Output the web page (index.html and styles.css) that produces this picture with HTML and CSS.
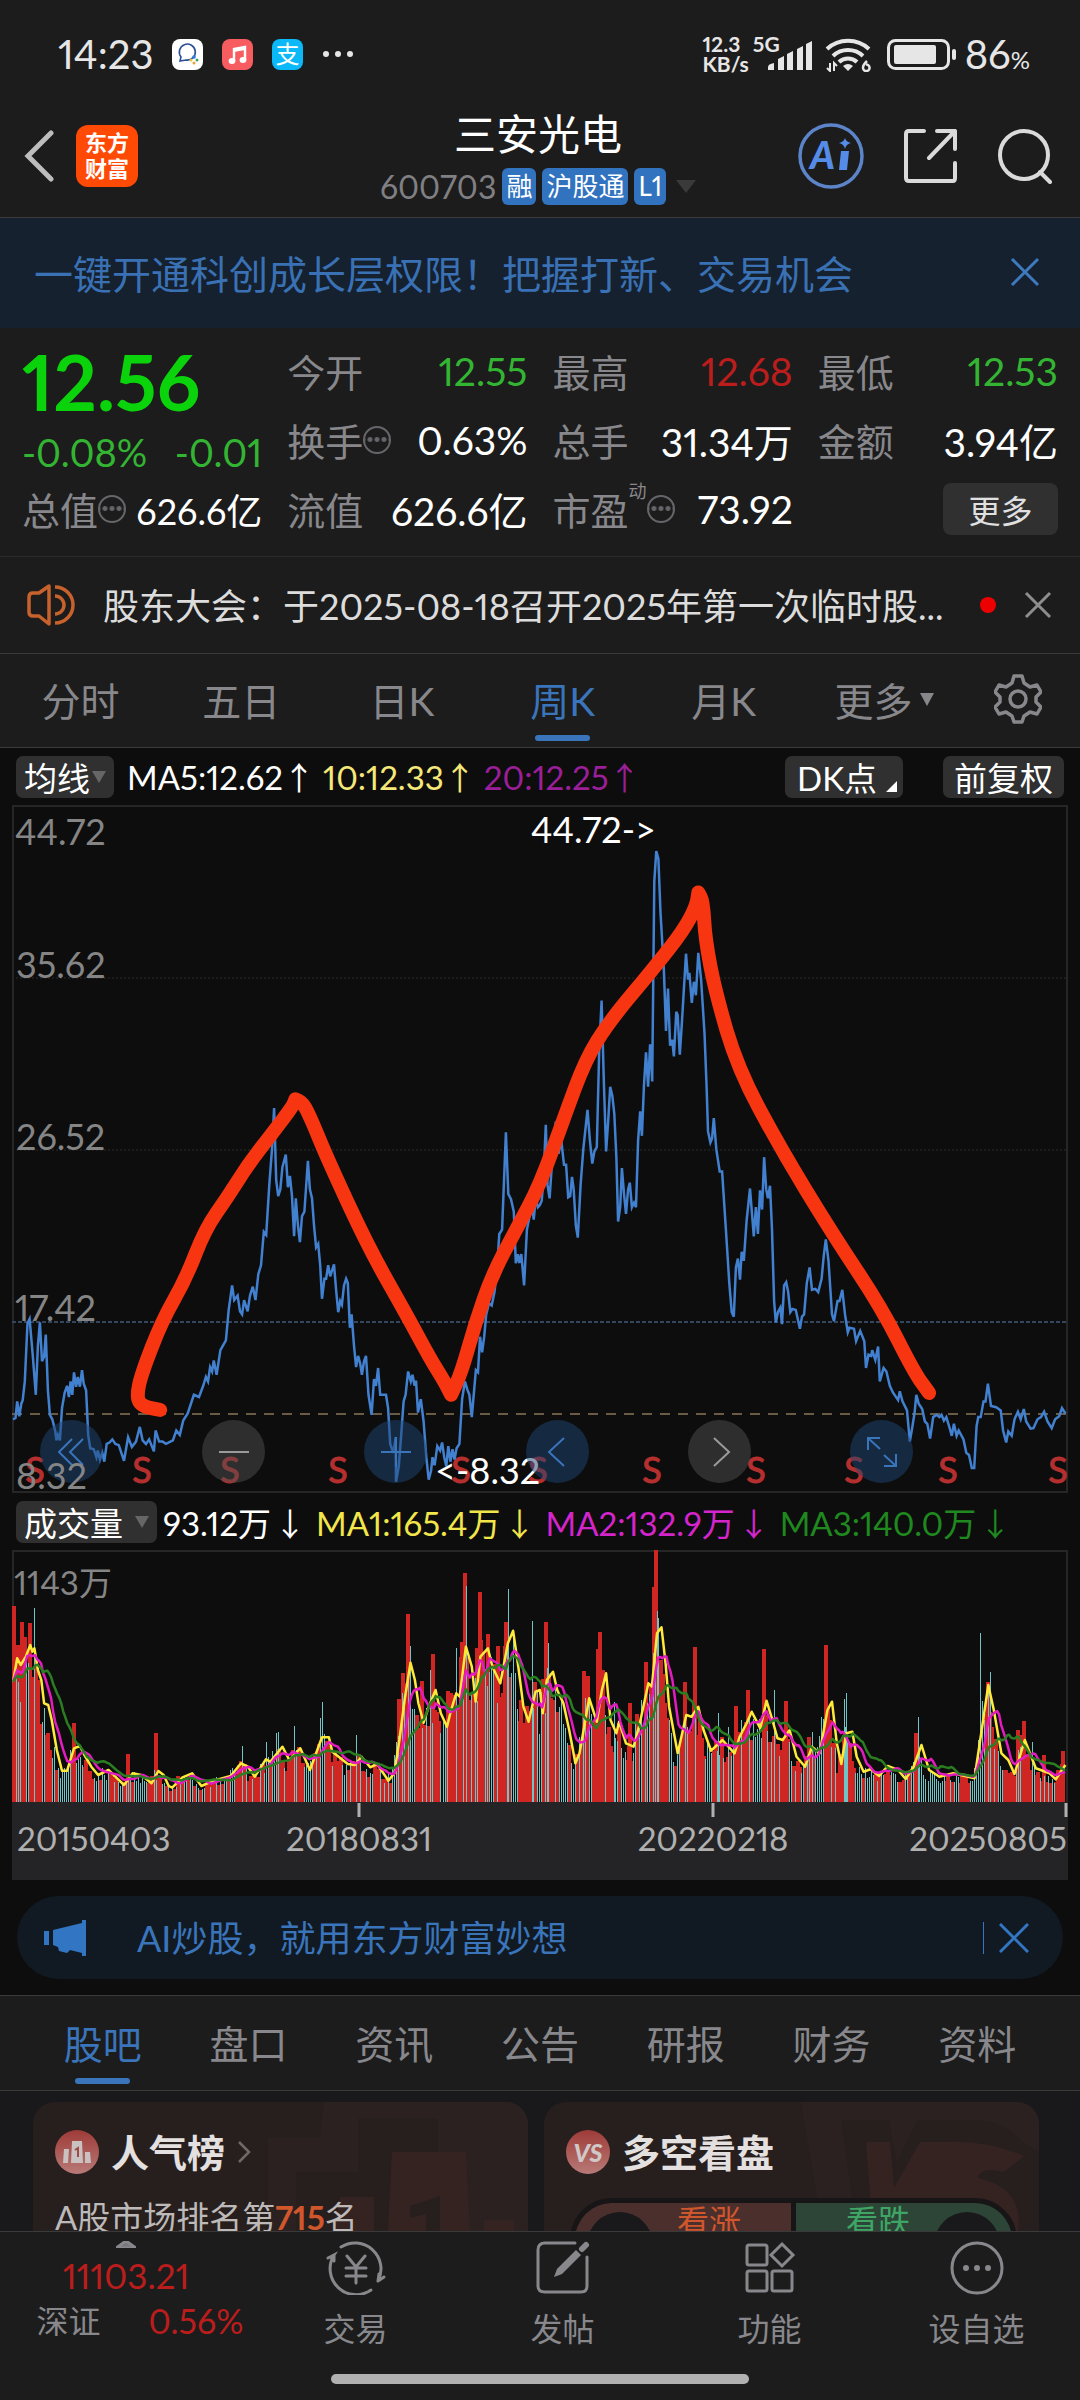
FILE: index.html
```html
<!DOCTYPE html>
<html lang="zh-CN">
<head>
  <meta charset="UTF-8" />
  <meta name="viewport" content="width=device-width, initial-scale=1.0"/>
  <title>三安光电 600703</title>
  <link rel="stylesheet" href="styles.css">
</head>
<body>
  <div class="statusbar">
    <span class="clock">14:23</span>
    <svg class="app-icon" viewBox="0 0 31 31">
      <rect width="31" height="31" rx="8" fill="#fff"/>
      <path d="M8 22l1-4a8 8 0 1 1 5 3z" fill="none" stroke="#2b4f96" stroke-width="1.6"/>
      <circle cx="22" cy="18" r="1.8" fill="#2f7be0"/><circle cx="25" cy="21" r="1.5" fill="#3aa655"/><circle cx="19" cy="21" r="1.5" fill="#e8c43a"/><circle cx="22" cy="24" r="1.5" fill="#e8a03a"/>
    </svg>
    <svg class="app-icon" viewBox="0 0 31 31">
      <rect width="31" height="31" rx="8" fill="#f75d60"/>
      <path d="M12 22V10l11-2v13" fill="none" stroke="#fff" stroke-width="2.4"/><path d="M12 10l11-2v3l-11 2z" fill="#fff"/>
      <ellipse cx="10" cy="22" rx="3.4" ry="3" fill="#fff"/><ellipse cx="21" cy="21" rx="3.4" ry="3" fill="#fff"/>
    </svg>
    <span class="app-icon pay">支</span>
    <svg class="more-dots" viewBox="0 0 32 8"><circle cx="4" cy="4" r="3" fill="#e6e6e6"/><circle cx="16" cy="4" r="3" fill="#e6e6e6"/><circle cx="28" cy="4" r="3" fill="#e6e6e6"/></svg>
    <span class="speed">12.3<br>KB/s</span>
    <span class="net">5G</span>
    <svg class="signal" viewBox="0 0 45 30" fill="#e6e6e6">
      <path d="M0 29v-3q0-3 6-4v7zM10 29V18l6-3v14zM19 29V13l6-3v19zM29 29V8l6-3v24zM38 29V3l6-3v29z"/>
    </svg>
    <svg class="wifi" viewBox="0 0 48 36" fill="none" stroke="#e6e6e6" stroke-width="4">
      <path d="M2 13a31 31 0 0 1 42 0M8 20a22 22 0 0 1 30 0M14 26a13 13 0 0 1 18 0"/>
      <path d="M23 35l-5-5q5-4 10 0z" fill="#e6e6e6" stroke="none"/>
      <path d="M5 27v8l-3-3M9 35v-8l3 3" stroke-width="2"/>
      <path d="M42 25q-4 4-4 6.500a3.300 3.300 0 1 0 3-3" stroke-width="2.500"/>
    </svg>
    <svg class="battery" viewBox="0 0 70 31">
      <rect x="1.500" y="1.500" width="60" height="28" rx="7" fill="none" stroke="#e6e6e6" stroke-width="3"/>
      <rect x="7" y="6" width="42" height="19" rx="2" fill="#e6e6e6"/>
      <rect x="65" y="10" width="4" height="11" rx="2" fill="#e6e6e6"/>
    </svg>
    <span class="percent">86<small>%</small></span>
  </div>

  <header class="header">
    <div class="header-side">
      <button class="icon-btn back" aria-label="返回">
        <svg width="30" height="52" viewBox="0 0 30 52"><path d="M27 3L4 26l23 23" fill="none" stroke="#bdbdbd" stroke-width="5" stroke-linecap="round"/></svg>
      </button>
      <a class="logo" href="#">东方<br>财富</a>
    </div>
    <div class="stock">
      <h1>三安光电</h1>
      <div class="stock-sub">
        <span class="code">600703</span>
        <span class="tag">融</span><span class="tag">沪股通</span><span class="tag">L1</span>
        <svg width="20" height="13" viewBox="0 0 20 13"><path d="M0 0h20L10 13z" fill="#3a3a3a"/></svg>
      </div>
    </div>
    <div class="header-side right">
      <button class="icon-btn" aria-label="AI">
        <svg width="66" height="68" viewBox="0 0 66 68">
          <circle cx="33" cy="34" r="31" fill="none" stroke="#5b84c9" stroke-width="3.500"/>
          <text x="12" y="47" class="ai-text">A</text>
          <path d="M43 29h8l-2 19h-8z" fill="#548ce8"/>
          <path d="M47 16q1 4 6 5q-5 1-6 6q-1-5-6-6q5-1 6-5z" fill="#548ce8"/>
        </svg>
      </button>
      <button class="icon-btn" aria-label="分享">
        <svg width="54" height="54" viewBox="0 0 54 54" fill="none" stroke="#dadada" stroke-width="4" stroke-linecap="round" stroke-linejoin="round"><path d="M20 2H5q-3 0-3 3v44q0 3 3 3h44q2 0 2-3V34M33 2h18v18M51 2L25 29"/></svg>
      </button>
      <button class="icon-btn" aria-label="搜索">
        <svg width="54" height="56" viewBox="0 0 54 56" fill="none" stroke="#dadada" stroke-width="4" stroke-linecap="round"><circle cx="26" cy="27" r="24"/><path d="M42 44l10 10"/></svg>
      </button>
    </div>
  </header>

  <div class="promo">
    <a href="#">一键开通科创成长层权限！把握打新、交易机会</a>
    <button class="icon-btn" aria-label="关闭">
      <svg width="30" height="30" viewBox="0 0 30 30"><path d="M2 2l26 26M28 2L2 28" stroke="#3f7ac0" stroke-width="3"/></svg>
    </button>
  </div>

  <section class="quote">
    <div class="price-box">
      <div class="price">12.56</div>
      <div class="change"><span>-0.08%</span><span>-0.01</span></div>
    </div>
    <div class="item"><span class="label">今开</span><span class="value green">12.55</span></div>
    <div class="item"><span class="label">最高</span><span class="value red">12.68</span></div>
    <div class="item"><span class="label">最低</span><span class="value green">12.53</span></div>
    <div class="item"><span class="label">换手<i class="tip"></i></span><span class="value">0.63%</span></div>
    <div class="item"><span class="label">总手</span><span class="value">31.34万</span></div>
    <div class="item"><span class="label">金额</span><span class="value">3.94亿</span></div>
    <div class="item"><span class="label">总值<i class="tip"></i></span><span class="value small">626.6亿</span></div>
    <div class="item"><span class="label">流值</span><span class="value">626.6亿</span></div>
    <div class="item"><span class="label">市盈<sup>动</sup><i class="tip"></i></span><span class="value">73.92</span></div>
    <div class="item end"><button class="more-btn">更多</button></div>
  </section>

  <div class="notice">
    <svg width="48" height="42" viewBox="0 0 48 42" fill="none" stroke="#c8622c" stroke-width="3.500" stroke-linejoin="round"><path d="M2 13q0-4 4-4h6L22 2v38l-10-8H6q-4 0-4-4z"/><path d="M28 3a18 18 0 0 1 0 36M28 12a9 9 0 0 1 0 18"/></svg>
    <a href="#">股东大会：于2025-08-18召开2025年第一次临时股...</a>
    <i class="dot"></i>
    <button class="icon-btn" aria-label="关闭">
      <svg width="28" height="28" viewBox="0 0 28 28"><path d="M2 2l24 24M26 2L2 26" stroke="#8e8e8e" stroke-width="3"/></svg>
    </button>
  </div>

  <nav class="tabs">
    <button>分时</button>
    <button>五日</button>
    <button>日K</button>
    <button class="active">周K</button>
    <button>月K</button>
    <button>更多<svg width="14" height="13" viewBox="0 0 14 13"><path d="M0 0h14L7 13z" fill="#88888c"/></svg></button>
    <button class="gear" aria-label="设置">
      <svg width="48" height="50" viewBox="0 0 48 50" fill="none" stroke="#88888c" stroke-width="3.500" stroke-linejoin="round"><path d="M20 2h8l2 7 6 4 7-2 4 7-5 5v5l5 5-4 7-7-2-6 4-2 6h-8l-2-6-6-4-7 2-4-7 5-5v-5l-5-5 4-7 7 2 6-4z"/><circle cx="24" cy="25" r="8"/></svg>
    </button>
  </nav>

  <main class="board">
    <div class="legend">
      <button class="chip">均线<svg width="14" height="12" viewBox="0 0 14 12"><path d="M0 0h14L7 12z" fill="#666"/></svg></button>
      <span class="ma5">MA5:12.62<b>↑</b></span>
      <span class="ma10">10:12.33<b>↑</b></span>
      <span class="ma20">20:12.25<b>↑</b></span>
      <button class="chip dk">DK点<svg width="11" height="11" viewBox="0 0 11 11"><path d="M11 0v11H0z" fill="#fff"/></svg></button>
      <button class="chip fq">前复权</button>
    </div>

    <div class="chart">
      <svg id="price" viewBox="0 0 1056 688">
        <path class="frame" d="M1 1h1054v686H1z"/>
        <path class="grid-line" d="M0 173h1056M0 345h1056"/>
        <path class="mid-line" d="M0 517h1056"/>
        <path class="cost-line" d="M0 609h1056"/>
        <g class="s-mark" id="marks"></g>
        <polyline id="priceLine" class="price-line"/>
        <g class="axis">
          <text x="3" y="40">44.72</text>
          <text x="4" y="173">35.62</text>
          <text x="4" y="345">26.52</text>
          <text x="3" y="516">17.42</text>
        </g>
        <path id="brush" class="brush"/>
        <text class="peak" x="519" y="38">44.72-&gt;</text>
        <text class="peak" x="423" y="679">&lt;-8.32</text>
      </svg>
      <div class="tools">
        <button aria-label="最左"><svg viewBox="0 0 30 30"><path d="M15 2L2 15l13 13M26 2L13 15l13 13"/></svg></button>
        <button class="off" aria-label="缩小"><svg viewBox="0 0 30 30"><path d="M0 15h30"/></svg></button>
        <button aria-label="放大"><svg viewBox="0 0 30 30"><path d="M0 15h30M15 0v30"/></svg></button>
        <button aria-label="左移"><svg viewBox="0 0 30 30"><path d="M21 1L6 15l15 14"/></svg></button>
        <button class="off" aria-label="右移"><svg viewBox="0 0 30 30"><path d="M9 1l15 14L9 29"/></svg></button>
        <button aria-label="全屏"><svg viewBox="0 0 30 30"><path d="M1 13V1h12M1 1l12 11M29 17v12H17M29 29L17 18"/></svg></button>
      </div>
      <span class="low">8.32</span>
    </div>

    <div class="legend vol">
      <button class="chip">成交量<svg width="14" height="12" viewBox="0 0 14 12"><path d="M0 0h14L7 12z" fill="#666"/></svg></button>
      <span class="v0">93.12万<b>↓</b></span>
      <span class="v1">MA1:165.4万<b>↓</b></span>
      <span class="v2">MA2:132.9万<b>↓</b></span>
      <span class="v3">MA3:140.0万<b>↓</b></span>
    </div>

    <div class="chart">
      <svg id="volume" viewBox="0 0 1056 330">
        <path class="frame" d="M1 1h1054v252H1z"/>
        <rect y="252" width="1056" height="78" fill="#242426"/>
        <path id="redBars" fill="#cf2624"/>
        <path id="cyanBars" fill="#70c4c6"/>
        <text class="vol-max" x="2" y="45">1143万</text>
        <polyline id="ma1" stroke="#ffe93b"/>
        <polyline id="ma2" stroke="#e41bc0"/>
        <polyline id="ma3" stroke="#2a7d20"/>
        <path d="M347 253v14M701 253v14M1054 253v14" stroke="#b0b0b0" stroke-width="3"/>
        <g class="date">
          <text x="5" y="301">20150403</text>
          <text x="347" y="301" text-anchor="middle">20180831</text>
          <text x="701" y="301" text-anchor="middle">20220218</text>
          <text x="1055" y="301" text-anchor="end">20250805</text>
        </g>
      </svg>
    </div>

    <div class="ai-bar">
      <svg width="44" height="36" viewBox="0 0 44 36" fill="#3276c3"><path d="M0 11h5v14H0zM9 10L38 3V0h4v36h-4v-3l-12-3-3 3-8-2-1-4-5-2z"/></svg>
      <a href="#">AI炒股，就用东方财富妙想</a>
      <i class="split"></i>
      <button class="icon-btn" aria-label="关闭">
        <svg width="30" height="30" viewBox="0 0 30 30"><path d="M1 1l28 28M29 1L1 29" stroke="#3276c3" stroke-width="3"/></svg>
      </button>
    </div>
  </main>

  <nav class="tabs sub-tabs">
    <button class="active">股吧</button>
    <button>盘口</button>
    <button>资讯</button>
    <button>公告</button>
    <button>研报</button>
    <button>财务</button>
    <button>资料</button>
  </nav>

  <section class="cards">
    <article class="card">
      <svg class="card-art" viewBox="0 0 260 130" preserveAspectRatio="xMaxYMin slice"><path d="M56 0h204v130h-90V16H90v54H28v60H0V36h52z" fill="#2b2120"/><path d="M124 50h74l4 80h-82zM72 95h34v35H66zM216 118h30v12h-30z" fill="#352322"/><path d="M142 104l30-10v36h-14v-18l-16 4z" fill="#271e1e"/></svg>
      <h2>
        <svg width="44" height="44" viewBox="0 0 44 44"><defs><linearGradient id="badge" x1="0" y1="0" x2="0" y2="1"><stop offset="0" stop-color="#9e3b38"/><stop offset="1" stop-color="#b87a77"/></linearGradient></defs><circle cx="22" cy="22" r="22" fill="url(#badge)"/><path d="M9 19h5l-1 14H8zM17 11h10l1 22H16zM30 22h5l1 11h-6z" fill="#c9c2c1"/><path d="M20 20l3-2v9" fill="none" stroke="#a04a47" stroke-width="2"/></svg>
        人气榜
        <svg class="go" width="14" height="22" viewBox="0 0 14 22"><path d="M2 1l10 10L2 21" fill="none" stroke="#6f6968" stroke-width="2.500"/></svg>
      </h2>
      <p>A股市场排名第<b>715</b>名</p>
    </article>
    <article class="card">
      <svg class="card-art" viewBox="0 0 260 130" preserveAspectRatio="xMaxYMin slice"><path d="M22 0h238v50l-16-10q-20-24-56-22h-50L118 60l-8-42H62l16 112H44z" fill="#2b2120"/><path d="M87 40h24l4 46 26-46h26q40-2 78 14l-20 16q-24-6-26 6q46 10 40 54h-40q-6-20-36-22l-20 22H94z" fill="#352322"/></svg>
      <h2>
        <svg width="44" height="44" viewBox="0 0 44 44"><circle cx="22" cy="22" r="22" fill="url(#badge)"/><text class="vs" x="22" y="32" text-anchor="middle">VS</text></svg>
        多空看盘
      </h2>
      <div class="vote">
        <button class="up"><i></i>看涨</button>
        <button class="down">看跌<i></i></button>
      </div>
    </article>
  </section>

  <footer class="bottom">
    <div class="bottom-row">
      <a class="index" href="#">
        <svg width="20" height="7" viewBox="0 0 20 7"><path d="M0 7L10 0l10 7z" fill="#77777b"/></svg>
        <span class="index-num">11103.21</span>
        <span class="index-sub"><span>深证</span><span class="red">0.56%</span></span>
      </a>
      <a href="#">
        <svg viewBox="0 0 60 54"><path d="M15 6a26 26 0 0 1 37 34l6-4M45 49A26 26 0 0 1 8 14l-6 3M8 14v6M52 40l1-7M21 15l9 11 9-11M20 27h20M20 35h20M30 26v16"/></svg>
        交易
      </a>
      <a href="#">
        <svg viewBox="0 0 60 54"><path d="M42 2H12q-7 0-7 7v36q0 6 7 6h36q6 0 6-6V16"/><path d="M53 4L49 8" stroke-width="6"/><path d="M43 9l5 5-19 19-8 3 3-8z" fill="#88888c" stroke="none"/></svg>
        发帖
      </a>
      <a href="#">
        <svg viewBox="0 0 60 54"><rect x="7" y="4" width="20" height="20" rx="2"/><rect x="7" y="30" width="20" height="20" rx="2"/><rect x="32" y="30" width="20" height="20" rx="2"/><path d="M42 3l11 11-11 11-11-11z"/></svg>
        功能
      </a>
      <a href="#">
        <svg viewBox="0 0 60 54"><circle cx="30" cy="27" r="25"/><path d="M19 27h0M30 27h0M41 27h0" stroke-width="6"/></svg>
        设自选
      </a>
    </div>
    <div class="home-bar"></div>
  </footer>
  <script src="chart.js"></script>
</body>
</html>
```
FILE: chart.js
```js
// all series are stored on a 3136-unit wide canvas
const toX = u => u / 2.904 - 12;
const priceY = v => v / 2.24 - 4;
const volY = v => (v - 180) / 3;

const price = `38,1385 45,1382 50,1345 56,1378 62,1350 66,1342 72,1300 80,1170 86,1160 95,1240 104,1330 110,1220
116,1168 122,1255 128,1245 133,1195 139,1320 145,1375 152,1385 160,1410 164,1432 168,1420 174,1432 180,1360 188,1325
195,1310 200,1335 205,1300 210,1330 215,1280 221,1312 226,1290 232,1312 238,1275 243,1305 250,1320 256,1420 262,1450
272,1452 280,1470 284,1455 290,1475 297,1460 303,1480 310,1440 318,1437 326,1430 335,1440 345,1443 360,1478 372,1425
383,1447 395,1435 406,1402 414,1432 424,1440 433,1430 447,1457 452,1410 462,1435 472,1435 482,1440 502,1432 512,1410
522,1420 532,1388 545,1372 563,1330 578,1335 590,1310 598,1290 604,1300 610,1268 616,1278 621,1253 629,1285 640,1230
656,1208 664,1140 674,1085 680,1118 690,1108 697,1143 703,1150 709,1118 719,1143 726,1108 734,1088 742,1118 750,1060
758,1040 766,965 773,972 782,860 790,780 796,688 802,850 808,885 814,870 820,820 830,792 836,865 842,840 848,885
854,975 859,890 865,950 871,988 877,930 884,920 894,806 900,870 906,890 912,950 918,1000 924,992 930,1040 935,1115
942,1070 947,1070 953,1040 959,1065 964,1052 970,1038 976,1095 982,1145 988,1120 993,1128 999,1085 1005,1070 1010,1080
1016,1180 1021,1150 1028,1220 1034,1268 1040,1243 1046,1260 1051,1285 1057,1255 1063,1243 1070,1330 1079,1375
1086,1295 1092,1310 1098,1270 1104,1330 1121,1330 1127,1360 1133,1440 1142,1460 1149,1425 1150,1525 1158,1490
1165,1420 1172,1345 1178,1330 1185,1278 1193,1300 1198,1285 1204,1310 1208,1298 1214,1370 1222,1340 1230,1390
1238,1470 1245,1520 1252,1500 1256,1470 1262,1488 1270,1445 1278,1455 1284,1437 1290,1470 1296,1490 1302,1445
1308,1480 1314,1452 1320,1475 1326,1450 1334,1440 1342,1340 1350,1300 1357,1318 1363,1330 1370,1380 1378,1310
1382,1275 1388,1280 1394,1200 1400,1235 1406,1200 1412,1150 1420,1125 1428,1130 1436,1100 1442,1060 1450,970 1458,960
1469,742 1476,880 1484,892 1492,920 1498,1035 1504,1015 1508,1035 1514,1015 1522,1085 1530,960 1538,930 1544,900
1550,938 1556,890 1562,910 1568,905 1573,895 1578,850 1585,725 1590,860 1596,890 1602,820 1608,770 1614,718 1622,790
1630,760 1638,815 1644,815 1650,888 1656,885 1661,842 1666,870 1672,950 1678,978 1686,860 1694,780 1706,692 1713,760
1720,812 1726,785 1733,775 1740,560 1747,447 1754,640 1760,785 1766,720 1772,640 1778,660 1784,700 1790,800 1795,942
1801,910 1806,822 1812,880 1818,925 1824,870 1829,855 1835,910 1841,900 1847,910 1853,760 1859,695 1864,750 1870,640
1876,563 1882,640 1888,545 1894,628 1900,180 1906,112 1912,130 1918,250 1928,380 1934,515 1940,420 1946,548 1952,535
1957,572 1964,472 1968,480 1974,568 1980,500 1992,342 1998,400 2002,385 2009,452 2015,405 2021,435 2028,340 2036,400
2046,520 2052,640 2056,740 2063,765 2068,755 2073,710 2080,780 2090,830 2097,830 2108,960 2118,1080 2125,1145
2131,1155 2137,1045 2143,1025 2149,1072 2154,1010 2160,1030 2168,940 2178,868 2189,975 2195,910 2201,970 2207,872
2213,915 2219,798 2225,870 2230,890 2236,862 2242,960 2248,1120 2253,1168 2259,1145 2266,1135 2271,1172 2277,1085
2283,1078 2289,1100 2295,1145 2301,1138 2311,1140 2318,1165 2323,1182 2329,1155 2335,1150 2343,1080 2351,1045
2358,1095 2368,1093 2376,1100 2386,1070 2392,1020 2398,982 2406,1030 2416,1150 2422,1165 2432,1120 2438,1120
2446,1095 2454,1150 2462,1190 2467,1180 2480,1182 2486,1210 2498,1187 2510,1210 2515,1270 2522,1240 2530,1243
2533,1230 2542,1252 2550,1222 2555,1300 2566,1270 2574,1278 2584,1310 2593,1325 2608,1342 2613,1322 2621,1345
2634,1365 2642,1435 2650,1400 2656,1370 2661,1330 2668,1350 2678,1362 2686,1390 2693,1395 2701,1428 2710,1380
2720,1375 2728,1380 2734,1375 2741,1388 2748,1380 2758,1405 2764,1422 2770,1395 2778,1422 2784,1410 2798,1430
2806,1460 2814,1465 2822,1494 2829,1494 2836,1400 2841,1380 2848,1380 2856,1345 2862,1345 2869,1305 2878,1355
2893,1358 2906,1365 2913,1410 2922,1437 2928,1412 2938,1422 2946,1385 2956,1368 2964,1385 2973,1362 2980,1390
2993,1406 3001,1405 3013,1385 3023,1380 3032,1368 3042,1390 3054,1405 3064,1385 3076,1378 3084,1360 3094,1372`;

// repeated points keep the corners of the hand drawn line
const brush = `465,1364 432,1360 405,1350 398,1330 410,1285 470,1165 540,1070 595,960 660,888 720,815 795,740 850,684
858,668 858,668 880,676 905,715 950,800 1070,1000 1180,1150 1250,1250 1290,1300 1310,1330 1310,1330 1340,1280 1380,1170
1430,1060 1500,958 1568,860 1640,705 1700,580 1768,495 1895,378 1985,290 2022,235 2028,205 2028,205 2042,225 2048,310
2078,430 2143,600 2268,780 2418,970 2560,1135 2655,1280 2698,1326`;

const sMarks = [101, 412, 668, 982, 1338, 1562, 1894, 2196, 2480, 2754, 3073];

const ma1 = `38,575 50,505 60,525 75,500 88,465 94,485 100,475 110,540 120,570 128,640 140,645 150,690 165,780 180,842
195,842 215,775 232,768 245,795 265,830 285,855 315,840 340,865 360,885 385,850 410,855 440,880 460,843 475,855 490,888
500,893 530,862 558,850 585,888 620,872 670,858 700,820 720,830 740,860 772,808 785,815 820,770 840,810 872,775 900,840
935,742 955,742 965,785 1010,822 1030,825 1050,800 1075,832 1095,822 1128,872 1145,850 1160,750 1175,630 1192,518
1205,570 1215,640 1230,698 1245,650 1265,600 1280,670 1298,710 1310,660 1325,610 1335,620 1353,470 1370,530 1381,635
1395,500 1417,475 1430,530 1453,580 1475,460 1490,422 1505,530 1520,650 1535,695 1555,605 1568,600 1576,670 1588,570
1606,545 1618,600 1636,640 1653,720 1671,820 1683,790 1711,625 1733,695 1748,600 1760,550 1773,690 1790,730 1798,695
1818,760 1840,770 1858,700 1883,580 1893,590 1908,430 1921,412 1933,520 1943,650 1968,790 1993,675 2008,680 2028,650
2043,720 2065,782 2098,750 2133,790 2148,740 2168,700 2183,665 2208,715 2226,632 2243,690 2258,745 2273,750 2293,720
2313,800 2338,830 2358,770 2380,790 2403,660 2416,635 2430,760 2443,822 2458,730 2475,725 2488,800 2508,845 2528,838
2553,858 2578,828 2608,840 2630,867 2653,830 2676,765 2698,840 2728,860 2768,850 2830,865 2848,740 2870,585 2886,660
2908,790 2928,810 2946,852 2976,750 3008,835 3048,850 3066,868 3094,825`;

// volume peaks
const redPeaks = [[41,347],[53,465],[65,396],[72,440],[88,399],[216,698],[373,793],[454,730],[1158,627],[1170,550],
  [1186,372],[1225,572],[1256,492],[1302,603],[1343,457],[1349,250],[1384,473],[1395,305],[1418,432],[1447,468],
  [1469,397],[1586,397],[1697,543],[1708,557],[1736,478],[1743,427],[1830,638],[1877,515],[1899,292],[1906,180],
  [1988,577],[2017,472],[2138,648],[2173,600],[2220,476],[2283,634],[2348,742],[2400,466],[2661,730],[2870,575],
  [2956,720],[2975,694],[3033,795],[3086,782]];
const cyanPeaks = [[100,353],[704,767],[773,757],[803,730],[809,725],[855,707],[930,685],[936,636],[1035,735],
  [1192,468],[1249,540],[1326,475],[1354,288],[1476,296],[1546,393],[1592,460],[1784,635],[1912,384],[2086,670],
  [2115,712],[2248,600],[2359,725],[2452,628],[2458,610],[2667,682],[2847,430],[2876,547],[2998,755]];

const parse = s => s.trim().split(/\s+/).map(p => p.split(',').map(Number));
const $ = id => document.getElementById(id);

function drawLine(id, pts, fy) {
  $(id).setAttribute('points', pts.map(([u, v]) => toX(u).toFixed(1) + ',' + fy(v).toFixed(1)).join(' '));
}

function drawBrush(pts) {
  const p = pts.map(([u, v]) => [toX(u), priceY(v)]);
  let d = `M${p[0]}`;
  for (let i = 1; i < p.length - 1; i++) {
    const mid = [(p[i][0] + p[i + 1][0]) / 2, (p[i][1] + p[i + 1][1]) / 2];
    d += `Q${p[i]} ${mid}`;
  }
  d += `L${p[p.length - 1]}`;
  $('brush').setAttribute('d', d);
}

function valueAt(pts, u) {
  if (u <= pts[0][0]) return pts[0][1];
  for (let i = 1; i < pts.length; i++) {
    if (u <= pts[i][0]) {
      const [a, b] = [pts[i - 1], pts[i]];
      return a[1] + (b[1] - a[1]) * (u - a[0]) / (b[0] - a[0]);
    }
  }
  return pts[pts.length - 1][1];
}

let seed = 600703;
function rand() {
  seed = (seed * 16807) % 2147483647;
  return seed / 2147483647;
}

function bar(u, v, w) {
  // snap to whole pixels so that the thin bars stay crisp
  const x = Math.round(toX(u) - w / 2);
  const y = Math.round(volY(v));
  return `M${x} ${y}h${w}V252h-${w}z`;
}

function drawVolume() {
  const m = parse(ma1);
  const step = 5.82;
  let red = '', cyan = '', up = true;
  for (let u = 41; u < 3090; u += step) {
    if (rand() < 0.45) up = !up;
    const h = 935 - valueAt(m, u + 8);
    const v = 935 - h * (0.68 + rand() * 0.44);
    if (up) red += bar(u, v, 4);
    else cyan += bar(u, v, 1);
  }
  redPeaks.forEach(([u, v]) => red += bar(u, v, 4));
  cyanPeaks.forEach(([u, v]) => cyan += bar(u, v, 1));
  $('redBars').setAttribute('d', red);
  $('cyanBars').setAttribute('d', cyan);

  // longer averages come from lagged copies of the short one
  const lag = step * 5;
  const m2 = [], m3 = [];
  for (let u = 38; u <= 3094; u += step) {
    const at = k => valueAt(m, u - lag * k);
    m2.push([u, (at(0) + at(1)) / 2]);
    m3.push([u, (at(0) + at(1) + at(2) + at(3)) / 4]);
  }
  drawLine('ma1', m, volY);
  drawLine('ma2', m2, volY);
  drawLine('ma3', m3, volY);
}

drawLine('priceLine', parse(price), priceY);
drawBrush(parse(brush));
$('marks').innerHTML = sMarks.map(u => `<text x="${toX(u).toFixed(0)}" y="678">S</text>`).join('');
drawVolume();
```
FILE: styles.css
```css
* {
  box-sizing: border-box;
}
body {
  margin: 0;
  min-height: 100vh;
  display: flex;
  flex-direction: column;
  background-color: #1c1c1c;
  color: #fff;
  font-family: Lato, "Noto Sans CJK SC", sans-serif;
  font-variant-numeric: proportional-nums;
}
button {
  margin: 0;
  padding: 0;
  border: none;
  background: none;
  color: inherit;
  font: inherit;
}
a {
  color: inherit;
  text-decoration: none;
}
svg {
  display: block;
}
.red {
  color: #bb1d1d;
}
.green {
  color: #33b533;
}

/* status bar */
.statusbar {
  display: flex;
  align-items: center;
  height: 108px;
  padding: 0 50px 0 58px;
  color: #e6e6e6;
}
.clock {
  width: 114px;
  font-size: 40px;
}
.app-icon {
  width: 31px;
  height: 31px;
  margin-right: 19px;
}
.pay {
  border-radius: 8px;
  background-color: #0bb9f8;
  color: #fff;
  font-size: 24px;
  line-height: 30px;
  text-align: center;
}
.more-dots {
  width: 32px;
}
.speed {
  margin-left: auto;
  font-size: 21px;
  font-weight: bold;
  line-height: 20px;
}
.net {
  margin: 0 0 20px 4px;
  font-size: 21px;
  font-weight: bold;
  line-height: 20px;
}
.signal {
  width: 45px;
  margin: 4px 12px 0 -12px;
}
.wifi {
  width: 48px;
  margin-right: 14px;
}
.battery {
  width: 70px;
  margin-right: 8px;
}
.percent {
  font-size: 40px;
}
.percent small {
  font-size: 24px;
}

/* header */
.header {
  display: flex;
  justify-content: space-between;
  height: 110px;
  padding: 0 28px 0 24px;
  border-bottom: 1px solid #3a3a3a;
}
.header-side {
  display: flex;
  flex: 1;
  align-items: center;
  gap: 22px;
  padding-bottom: 14px;
}
.header-side.right {
  justify-content: flex-end;
  gap: 40px;
}
.logo {
  width: 62px;
  height: 62px;
  padding-top: 5px;
  border-radius: 12px;
  background-color: #ff4a05;
  font-size: 22px;
  font-weight: bold;
  line-height: 26px;
  text-align: center;
}
h1 {
  margin: 0;
  font-size: 42px;
  font-weight: normal;
  line-height: 52px;
  text-align: center;
}
.stock-sub {
  display: flex;
  align-items: center;
  gap: 6px;
  height: 52px;
}
.code {
  color: #808084;
  font-size: 32px;
}
.tag {
  padding: 0 4px;
  border-radius: 6px;
  background-color: #3273c0;
  font-size: 26px;
  line-height: 37px;
}
.stock-sub svg {
  margin-left: 4px;
}
.ai-text {
  fill: #548ce8;
  font-family: Lato, sans-serif;
  font-size: 38px;
  font-style: italic;
  font-weight: 900;
}

.promo {
  display: flex;
  align-items: center;
  justify-content: space-between;
  height: 110px;
  padding: 0 40px 3px 34px;
  background-color: #15212f;
  color: #3a71b5;
  font-size: 39px;
}

/* quote */
.quote {
  display: grid;
  grid-template-columns: repeat(4, 1fr);
  grid-auto-rows: 69px;
  column-gap: 25px;
  padding: 8px 22px 13px;
  border-bottom: 1px solid #2a2a2a;
}
.price-box {
  grid-row: span 2;
}
.price {
  color: #0bd30b;
  font-size: 76px;
  font-weight: bold;
  line-height: 92px;
}
.change {
  display: flex;
  justify-content: space-between;
  color: #33b533;
  font-size: 38px;
  line-height: 48px;
}
.item {
  display: flex;
  align-items: center;
  justify-content: space-between;
  white-space: nowrap;
}
.item.end {
  justify-content: flex-end;
}
.label {
  display: flex;
  align-items: center;
  color: #88888c;
  font-size: 38px;
}
.label sup {
  align-self: flex-start;
  font-size: 18px;
  line-height: 20px;
}
.value {
  font-size: 39px;
}
.value.small {
  font-size: 36px;
}
.tip {
  width: 28px;
  height: 28px;
  border: 2px solid #66666a;
  border-radius: 50%;
  background: radial-gradient(circle, #66666a 2px, transparent 3px) center / 7px 7px repeat-x;
}
.more-btn {
  width: 115px;
  height: 52px;
  border-radius: 8px;
  background-color: #303030;
  color: #e0e0e0;
  font-size: 32px;
}

.notice {
  display: flex;
  align-items: center;
  height: 97px;
  padding: 0 28px 0 27px;
  border-bottom: 1px solid #3a3a3a;
  color: #dcdcdc;
  font-size: 36px;
}
.notice a {
  flex: 1;
  margin-left: 28px;
  padding-bottom: 3px;
  white-space: nowrap;
}
.dot {
  width: 16px;
  height: 16px;
  margin-right: 28px;
  border-radius: 50%;
  background-color: #ec0000;
}

/* tabs */
.tabs {
  display: flex;
  height: 94px;
  padding-right: 8px;
  border-bottom: 1px solid #3a3a3a;
}
.tabs button {
  position: relative;
  display: flex;
  flex: 3;
  align-items: center;
  justify-content: center;
  padding-bottom: 3px;
  color: #88888c;
  font-size: 39px;
}
.tabs button svg {
  margin-left: 8px;
}
.tabs .gear {
  flex: 2;
}
.tabs .gear svg {
  margin: 0;
}
.tabs .active {
  color: #3a74bb;
}
.tabs .active::after {
  content: "";
  position: absolute;
  bottom: 6px;
  width: 55px;
  height: 6px;
  border-radius: 3px;
  background-color: #3a74bb;
}
.sub-tabs {
  height: 96px;
  padding: 0 30px;
  border-top: 1px solid #3a3a3a;
}

/* charts */
.board {
  padding: 0 12px 16px;
  background-color: #0d0d0d;
}
.legend {
  display: flex;
  align-items: center;
  gap: 8px;
  height: 57px;
  padding: 0 4px;
  font-size: 33px;
  white-space: nowrap;
}
.legend b {
  font-family: "Noto Sans CJK SC", sans-serif;
  font-size: 32px;
  font-weight: normal;
  line-height: 40px;
}
.chip {
  display: flex;
  align-items: center;
  gap: 2px;
  height: 42px;
  padding: 0 8px;
  border-radius: 7px;
  background-color: #303030;
  font-size: 33px;
}
.ma5 {
  margin-left: 5px;
}
.ma10 {
  color: #f5e878;
}
.ma20 {
  color: #9a1f98;
}
.dk {
  gap: 9px;
  margin-left: auto;
  padding: 0 6px 0 12px;
}
.dk svg {
  align-self: flex-end;
  margin-bottom: 6px;
}
.fq {
  margin-left: 32px;
  padding: 0 11px;
}
.vol .chip {
  gap: 12px;
}
.vol {
  gap: 6px;
}
.vol b {
  margin: 0 4px 0 3px;
}
.v1 {
  color: #f2e64a;
}
.v2 {
  color: #d424cc;
}
.v3 {
  color: #1f881f;
}
.chart {
  position: relative;
}
.chart > svg {
  width: 100%;
  height: auto;
}
.chart text {
  font-family: Lato, "Noto Sans CJK SC", sans-serif;
  font-size: 36px;
}
.frame {
  fill: none;
  stroke: #262626;
  stroke-width: 2;
}
.grid-line {
  stroke: #2c2c2c;
  stroke-dasharray: 2 2;
}
.mid-line {
  stroke: #34465e;
  stroke-width: 2;
  stroke-dasharray: 4 2;
}
.cost-line {
  stroke: #6a5b45;
  stroke-width: 2;
  stroke-dasharray: 10 8;
}
.price-line {
  fill: none;
  stroke: #4280d0;
  stroke-width: 2.5;
}
.brush {
  fill: none;
  stroke: #f73611;
  stroke-width: 14;
  stroke-linecap: round;
  stroke-linejoin: round;
}
.axis text,
.chart .vol-max {
  fill: #858585;
}
.chart .vol-max {
  font-size: 33px;
}
.chart .date text {
  fill: #b0b0b0;
  font-size: 33px;
}
.peak {
  fill: #fff;
}
.s-mark text {
  fill: #b52f2f;
  stroke: #b52f2f;
  text-anchor: middle;
}
#volume polyline {
  fill: none;
  stroke-width: 2.5;
  stroke-linejoin: round;
}
.tools {
  position: absolute;
  bottom: 10px;
  left: 28px;
  display: flex;
  gap: 99px;
}
.tools button {
  display: flex;
  align-items: center;
  justify-content: center;
  width: 63px;
  height: 63px;
  border-radius: 50%;
  background-color: rgba(30, 70, 118, 0.5);
}
.tools svg {
  width: 30px;
  height: 30px;
  fill: none;
  stroke: #3a74bb;
  stroke-width: 2;
}
.tools .off {
  background-color: rgba(80, 80, 80, 0.5);
}
.tools .off svg {
  stroke: #9a9a9a;
}
.low {
  position: absolute;
  bottom: 2px;
  left: 4px;
  color: #858585;
  font-size: 36px;
  line-height: 32px;
}

.ai-bar {
  display: flex;
  align-items: center;
  height: 83px;
  margin: 16px 5px 0;
  padding: 0 34px 0 27px;
  border-radius: 42px;
  background-color: #111a22;
  color: #3a74bb;
  font-size: 36px;
}
.ai-bar a {
  flex: 1;
  margin-left: 49px;
  padding-bottom: 3px;
}
.split {
  width: 1px;
  height: 32px;
  margin-right: 15px;
  background-color: #3a74bb;
}

/* cards */
.cards {
  display: grid;
  flex: 1 0 0;
  grid-template-columns: 1fr 1fr;
  gap: 16px;
  min-height: 140px;
  padding: 11px 41px 0 33px;
  overflow: hidden;
  background-color: #19191b;
}
.card {
  position: relative;
  padding: 27px 22px 0;
  border-radius: 22px 22px 0 0;
  background-color: #271f1e;
  overflow: hidden;
}
.card-art {
  position: absolute;
  top: 0;
  right: 0;
  width: 260px;
  height: 130px;
}
h2 {
  position: relative;
  display: flex;
  align-items: center;
  gap: 12px;
  margin: 0;
  color: #e4e0e0;
  font-size: 38px;
  font-weight: bold;
  line-height: 46px;
}
.vs {
  fill: #d0c8c7;
  font-family: Lato, sans-serif;
  font-size: 25px;
  font-style: italic;
  font-weight: 900;
}
.card p {
  position: relative;
  margin: 19px 0 0;
  color: #bdb9b8;
  font-size: 33px;
  line-height: 46px;
  white-space: nowrap;
}
.card p b {
  color: #d0562c;
}
.vote {
  position: relative;
  display: flex;
  gap: 5px;
  height: 80px;
  margin: 23px 0 0 4px;
  border: 5px solid #171516;
  border-radius: 42px 42px 0 0;
  background-color: #171516;
  overflow: hidden;
}
.vote button {
  display: flex;
  flex: 1;
  justify-content: space-between;
  padding: 0 50px 0 12px;
  background-color: #4a2f2d;
  color: #d0562c;
  font-size: 32px;
  line-height: 36px;
}
.vote .down {
  padding: 0 12px 0 50px;
  background-color: #2c4537;
  color: #3fa565;
}
.vote i {
  width: 66px;
  height: 66px;
  margin-top: 9px;
  border-radius: 50%;
  background-color: #19191b;
}

/* bottom nav */
.bottom {
  padding-bottom: 16px;
  border-top: 1px solid #3a3a3a;
  color: #88888c;
}
.bottom-row {
  display: flex;
  height: 142px;
}
.bottom-row a {
  display: flex;
  flex: 1;
  flex-direction: column;
  align-items: center;
  gap: 11px;
  padding-top: 9px;
  font-size: 32px;
  line-height: 46px;
}
.bottom-row a > svg {
  width: 60px;
  height: 54px;
  fill: none;
  stroke: #88888c;
  stroke-width: 3;
  stroke-linecap: round;
}
.bottom-row .index {
  flex: 0 0 252px;
  gap: 0;
}
.bottom-row .index > svg {
  width: 20px;
  height: 7px;
}
.index-num {
  margin-top: 4px;
  color: #bb1d1d;
  font-size: 35px;
}
.index-sub {
  display: flex;
  gap: 48px;
  padding-left: 28px;
}
.index-sub .red {
  font-size: 34px;
}
.home-bar {
  width: 418px;
  height: 10px;
  margin: 0 auto;
  border-radius: 5px;
  background-color: #b0b0b0;
}
```
